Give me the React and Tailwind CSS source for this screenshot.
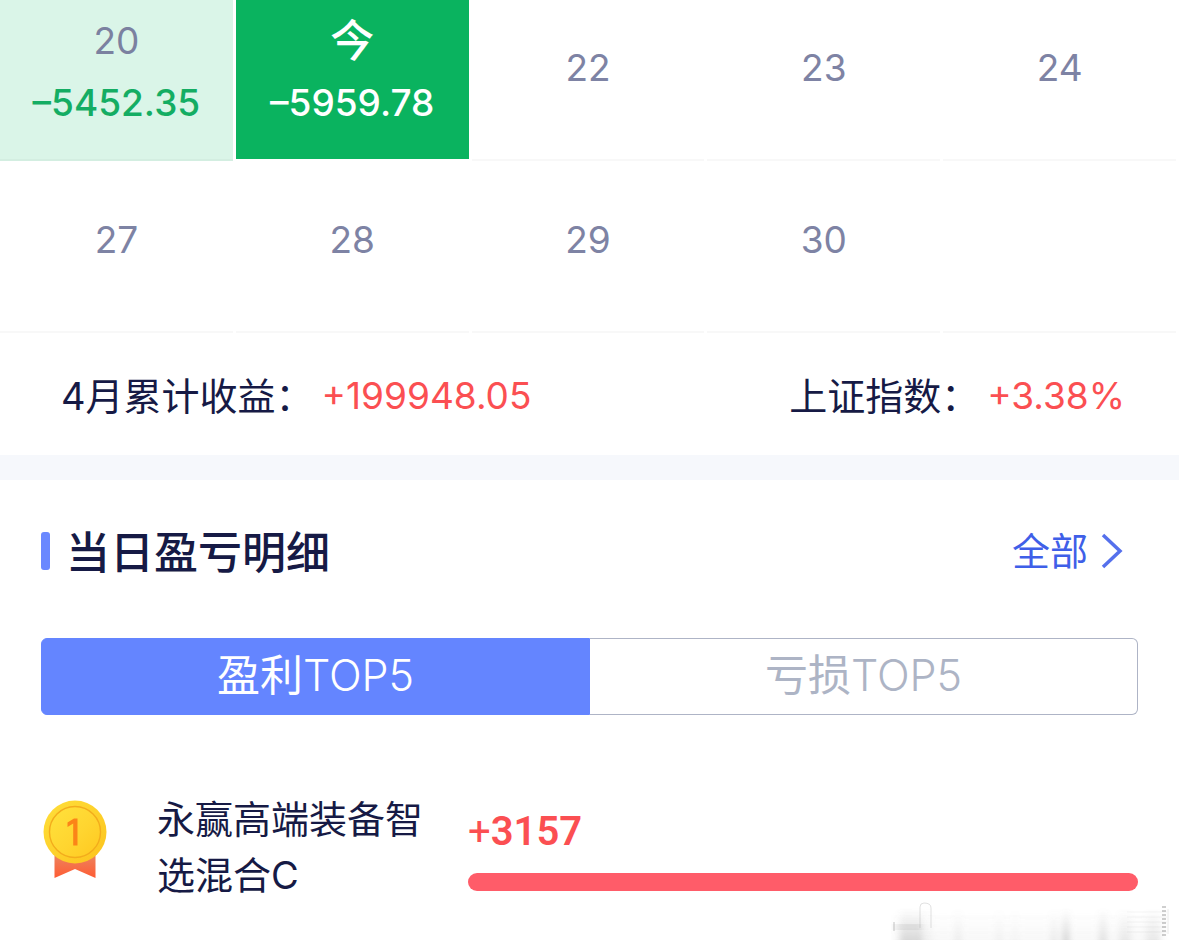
import React, { useState } from "react";

const weeks = [
  {
    id: "w4",
    height: "h-[161px]",
    padding: "pb-6",
    days: [
      { day: "20", profit: "–5452.35", type: "loss" },
      { day: "今", profit: "–5959.78", type: "today" },
      { day: "22" },
      { day: "23" },
      { day: "24" },
    ],
  },
  {
    id: "w5",
    height: "h-[172px]",
    padding: "pb-3",
    days: [{ day: "27" }, { day: "28" }, { day: "29" }, { day: "30" }, { day: "" }],
  },
];

const funds = [{ id: 1, name: "永赢高端装备智选混合C", amount: "3157", percent: 100 }];

function DayCell({ item, padding }) {
  if (item.type === "loss") {
    return (
      <button className="flex flex-col items-center justify-end gap-3.5 border-b-2 border-[#d3eee1] bg-[#daf5e8] pb-8">
        <span className="text-[37px] leading-[48px] text-[#7b81a0]">{item.day}</span>
        <span className="text-[37px] leading-[48px] font-medium text-[#14ad63]">{item.profit}</span>
      </button>
    );
  }
  if (item.type === "today") {
    return (
      <button className="mb-0.5 flex flex-col items-center justify-end gap-3.5 bg-[#0ab35f] pb-8 text-white">
        <span className="text-[44px] leading-[48px] font-medium">{item.day}</span>
        <span className="text-[37px] leading-[48px] font-medium">{item.profit}</span>
      </button>
    );
  }
  if (!item.day) {
    return <div className="border-b-2 border-[#f8f8f8]" />;
  }
  return (
    <button className={`flex items-center justify-center border-b-2 border-[#f8f8f8] ${padding}`}>
      <span className="text-[37px] leading-[48px] text-[#7e83a4]">{item.day}</span>
    </button>
  );
}

function Medal() {
  return (
    <svg viewBox="0 0 64 80" className="h-20 w-16 shrink-0" role="img" aria-label="1">
      <defs>
        <linearGradient id="ribbon" x1="0" y1="0" x2="0" y2="1">
          <stop offset="0.3" stopColor="#ef7d58" />
          <stop offset="1" stopColor="#ff5c33" />
        </linearGradient>
        <linearGradient id="coin" x1="0" y1="0" x2="1" y2="1">
          <stop offset="0" stopColor="#ffdf3a" />
          <stop offset="1" stopColor="#fcc31d" />
        </linearGradient>
        <linearGradient id="face" x1="0" y1="0" x2="1" y2="1">
          <stop offset="0" stopColor="#ffe23c" />
          <stop offset="0.55" stopColor="#ffd530" />
          <stop offset="1" stopColor="#ffc81f" />
        </linearGradient>
      </defs>
      <path d="M11.500 50H52.500V78L32 69L11.500 78Z" fill="url(#ribbon)" />
      <circle cx="32" cy="32" r="31.500" fill="url(#coin)" />
      <circle cx="32" cy="32" r="25.500" fill="url(#face)" stroke="#f3ac1c" strokeWidth="1.400" />
      <path d="M24.500 22.500L31 18.500H34.500V45.500H30.200V23.500L24.500 27Z" fill="#fb8418" />
    </svg>
  );
}

function FundRow({ fund }) {
  return (
    <li className="flex items-start">
      <div className="pt-[9px] pl-0.5">
        <Medal />
      </div>
      <p className="ml-[50px] w-[266px] shrink-0 text-[38px] leading-[56px]">{fund.name}</p>
      <div className="ml-[45px] flex-1 pt-3.5">
        <p className="font-[Roboto,sans-serif] text-[40px] leading-[54px] font-semibold text-[#fb4f52]">
          <span className="font-normal">+</span>
          {fund.amount}
        </p>
        <div className="mt-3.5 h-[18px]">
          <div className="h-full rounded-full bg-[#ff5c69]" style={{ width: `${fund.percent}%` }} />
        </div>
      </div>
    </li>
  );
}

// Faint smear in the bottom corner
function Smudge() {
  const bars = [
    [20, 22, 0.16], [35, 12, 0.04], [67, 6, 0.07], [108, 5, 0.05], [124, 4, 0.04],
    [163, 6, 0.08], [175, 6, 0.2], [212, 7, 0.13], [234, 12, 0.08], [262, 14, 0.08],
  ];
  return (
    <svg viewBox="0 0 280 42" className="absolute right-2 bottom-2 h-[42px] w-[280px]" aria-hidden="true">
      <defs>
        <linearGradient id="fade" x1="0" y1="0" x2="0" y2="1">
          <stop offset="0" stopColor="#777" stopOpacity="0" />
          <stop offset="1" stopColor="#777" />
        </linearGradient>
        <filter id="soft" x="-10%" y="-10%" width="120%" height="120%">
          <feGaussianBlur stdDeviation="3 0.5" />
        </filter>
      </defs>
      <g filter="url(#soft)">
        <rect x="2" y="10" width="270" height="28" fill="url(#fade)" opacity="0.05" />
        {bars.map(([x, width, opacity]) => (
          <rect key={x} x={x - width / 2} y="6" width={width} height="32" fill="url(#fade)" opacity={opacity * 1.5} />
        ))}
        <rect x="3" y="22" width="28" height="6" fill="#888" opacity="0.12" />
      </g>
      <rect x="2" y="20" width="2" height="9" fill="#888" opacity="0.25" />
      <path d="M29 26V5Q29 1 33 1Q40 1 40 6V26" fill="none" stroke="#888" opacity="0.25" />
      <path d="M236 10H276M236 15H276M236 20H276M236 25H276M236 30H276" stroke="#999" opacity="0.1" />
      <path d="M273 4V34" stroke="#777" strokeWidth="4" strokeDasharray="2 2" opacity="0.35" />
      <path d="M277 7V32" stroke="#999" opacity="0.2" />
    </svg>
  );
}

export default function App() {
  const [tab, setTab] = useState("profit");

  const tabClass = (name) =>
    tab === name ? "border-[#6485ff] bg-[#6485ff] text-white" : "border-[#aeb4c6] bg-white text-[#adb4c5]";

  return (
    <main className="relative min-h-screen overflow-hidden bg-white font-[Inter,'Noto_Sans_CJK_SC',sans-serif] text-[#161a45]">
      {/* Kalender */}
      <section>
        {weeks.map((week) => (
          <div key={week.id} className={`grid grid-cols-5 gap-[3px] pr-[3px] ${week.height}`}>
            {week.days.map((item, index) => (
              <DayCell key={index} item={item} padding={week.padding} />
            ))}
          </div>
        ))}
        <div className="flex h-[122px] items-center justify-between pt-1 pr-[54px] pl-[61px] text-[38px] leading-[56px]">
          <p className="flex gap-2">
            <span>4月累计收益：</span>
            <span className="text-[37px] text-[#fb4f52]">+199948.05</span>
          </p>
          <p className="flex gap-2">
            <span>上证指数：</span>
            <span className="text-[37px] text-[#fb4f52]">+3.38%</span>
          </p>
        </div>
      </section>

      <div className="h-[25px] bg-[#f6f8fc]" />

      {/* Detail harian */}
      <section className="px-[41px] pt-[41px]">
        <div className="flex items-center justify-between">
          <div className="flex items-center gap-4">
            <span className="h-[38px] w-[9px] rounded-[3px] bg-[#6a88ff]" />
            <h2 className="pt-1 text-[44px] leading-[56px] font-medium">当日盈亏明细</h2>
          </div>
          <a href="#all" className="flex items-center gap-3 pr-3.5 text-[38px] leading-[56px] text-[#3f5fe8]">
            全部
            <svg viewBox="0 0 24 36" className="h-9 w-6" fill="none" stroke="#5570ec" strokeWidth="3.500">
              <path d="M3 2L20 18L3 34" />
            </svg>
          </a>
        </div>

        <div className="mt-[57px] flex h-[77px] text-[43px] leading-[60px]">
          <button onClick={() => setTab("profit")} className={`flex-1 rounded-l-md border pb-1 ${tabClass("profit")}`}>
            盈利<span className="font-light">TOP5</span>
          </button>
          <button onClick={() => setTab("loss")} className={`flex-1 rounded-r-md border border-l-0 pb-1 ${tabClass("loss")}`}>
            亏损<span className="font-light">TOP5</span>
          </button>
        </div>

        <ul className="mt-[76px]">
          {funds.map((fund) => (
            <FundRow key={fund.id} fund={fund} />
          ))}
        </ul>
      </section>

      <Smudge />
    </main>
  );
}
